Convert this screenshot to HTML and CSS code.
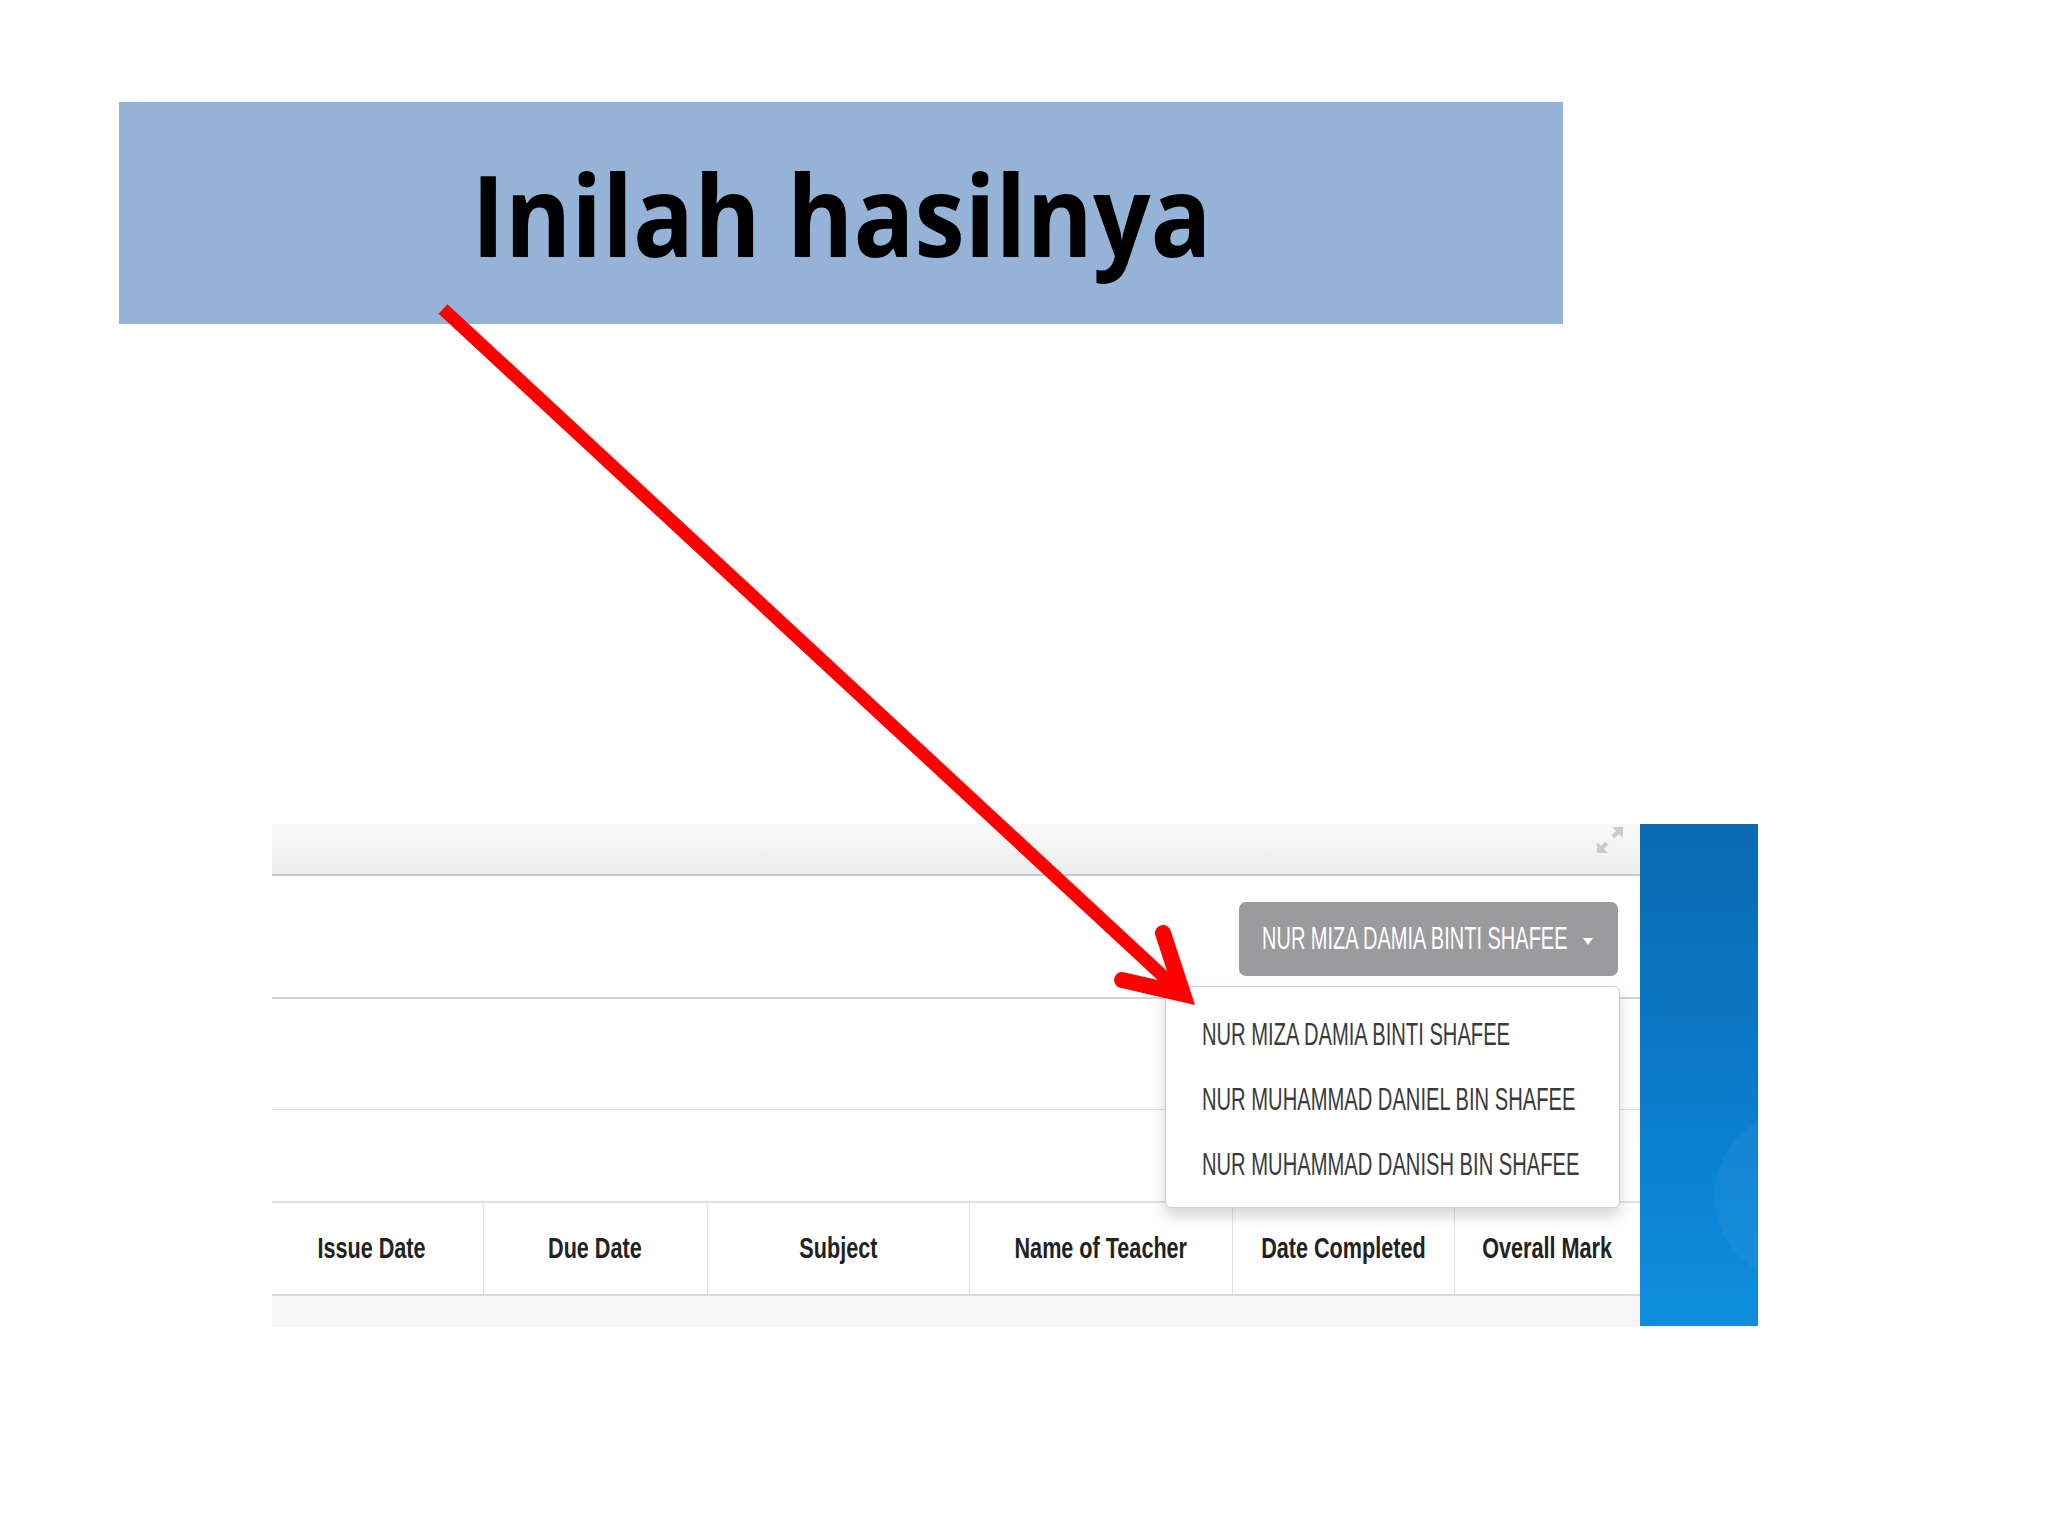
FILE: index.html
```html
<!DOCTYPE html>
<html lang="id">
<head>
  <meta charset="UTF-8">
  <meta name="viewport" content="width=device-width, initial-scale=1.0">
  <title>Inilah hasilnya</title>
  <link rel="stylesheet" href="styles.css">
</head>
<body>
  <div class="slide">
    <div class="banner">
      <h1 class="title">Inilah hasilnya</h1>
    </div>

    <div class="shot">
      <div class="app">
        <div class="app-top">
          <svg class="expand" viewBox="0 0 30 30">
            <path d="M4 26 L12 18 M18 12 L26 4" stroke="#cbcbcd" stroke-width="4" fill="none"/>
            <path d="M2 28 V17 L13 28 Z M28 2 H17 L28 13 Z" fill="#cbcbcd"/>
          </svg>
        </div>
        <div class="app-toolbar">
          <button class="student-btn">
            <span class="squash">NUR MIZA DAMIA BINTI SHAFEE</span>
            <span class="caret"></span>
          </button>
        </div>
        <div class="app-filter"></div>
        <div class="app-gap"></div>
        <table class="hw-table">
          <colgroup>
            <col style="width: 211px">
            <col style="width: 224px">
            <col style="width: 262px">
            <col style="width: 263px">
            <col style="width: 222px">
            <col>
          </colgroup>
          <thead>
            <tr>
              <th><span class="th-label">Issue Date</span></th>
              <th><span class="th-label">Due Date</span></th>
              <th><span class="th-label">Subject</span></th>
              <th><span class="th-label">Name of Teacher</span></th>
              <th><span class="th-label">Date Completed</span></th>
              <th><span class="th-label">Overall Mark</span></th>
            </tr>
          </thead>
          <tbody>
            <tr><td colspan="6"></td></tr>
          </tbody>
        </table>

        <ul class="student-menu">
          <li><span class="squash">NUR MIZA DAMIA BINTI SHAFEE</span></li>
          <li><span class="squash">NUR MUHAMMAD DANIEL BIN SHAFEE</span></li>
          <li><span class="squash">NUR MUHAMMAD DANISH BIN SHAFEE</span></li>
        </ul>
      </div>
      <div class="side"></div>
    </div>

    <!-- red pointer from the heading down to the menu -->
    <svg class="pointer" viewBox="0 0 2048 1536">
      <line x1="443" y1="309" x2="1178" y2="990" stroke="#ff0000" stroke-width="13"/>
      <polyline points="1163,933 1183,994 1122,980" fill="none" stroke="#ff0000" stroke-width="16" stroke-linecap="round" stroke-linejoin="miter"/>
    </svg>
  </div>
</body>
</html>
```

FILE: styles.css
```css
body {
  margin: 0;
  background: #fff;
  font-family: "Liberation Sans", Arial, sans-serif;
}
.slide {
  position: relative;
  width: 2048px;
  height: 1536px;
  overflow: hidden;
  background: #fefefe;
}
.banner {
  margin: 102px 0 0 119px;
  width: 1444px;
  height: 222px;
  background: #95b3d7;
  display: flex;
  align-items: center;
  justify-content: center;
}
.title {
  margin: 0;
  font-family: "Open Sans", sans-serif;
  font-weight: 700;
  font-size: 113px;
  line-height: 1;
  color: #000;
  transform: scaleX(0.895);
  white-space: nowrap;
}

/* app screenshot */
.shot {
  margin: 500px 0 0 272px;
  width: 1486px;
  height: 502px;
  display: flex;
}
.app {
  position: relative;
  width: 1368px;
  display: flex;
  flex-direction: column;
  background: #fefefe;
}
.app-top {
  flex: none;
  height: 52px;
  border-bottom: 2px solid #cacacc;
  background: linear-gradient(#f9f9fa, #ededef);
  display: flex;
  justify-content: flex-end;
  align-items: flex-start;
  padding: 1px 15px 0 0;
  box-sizing: border-box;
}
.expand {
  width: 30px;
  height: 30px;
}
.app-toolbar {
  flex: none;
  height: 123px;
  border-bottom: 2px solid #d2d2d4;
  display: flex;
  justify-content: flex-end;
  align-items: flex-start;
  padding: 26px 22px 0 0;
  box-sizing: border-box;
}
.student-btn {
  width: 379px;
  height: 74px;
  border: none;
  border-radius: 7px;
  background: #9b9a9d;
  color: #fff;
  font-family: "Liberation Sans", Arial, sans-serif;
  font-size: 31px;
  display: flex;
  align-items: center;
  padding: 0 25px 0 23px;
}
.student-btn .squash {
  flex: 1;
  min-width: 0;
  text-align: left;
  transform: scaleX(0.645);
}
.caret {
  flex: none;
  width: 0;
  height: 0;
  margin-top: 4px;
  border-top: 7px solid #fff;
  border-left: 5px solid transparent;
  border-right: 5px solid transparent;
}
.squash {
  display: inline-block;
  white-space: nowrap;
  transform-origin: left center;
}
.app-filter {
  flex: none;
  height: 110px;
  border-bottom: 1px solid #dedee0;
}
.app-gap {
  flex: none;
  height: 91px;
}
.hw-table {
  width: 100%;
  border-collapse: collapse;
  table-layout: fixed;
  border-top: 2px solid #e0e0e2;
}
.hw-table th {
  height: 91px;
  padding: 0;
  border-left: 1px solid #e2e2e4;
  border-bottom: 2px solid #dadadc;
  font-size: 29px;
  font-weight: 700;
  color: #222;
  white-space: nowrap;
  text-align: center;
}
.hw-table th:first-child {
  border-left: none;
  padding-right: 12px;
}
.th-label {
  display: inline-block;
  transform: scaleX(0.745);
}
.hw-table td {
  height: 31px;
  padding: 0;
  background: #f6f6f7;
}

/* open dropdown */
.student-menu {
  position: absolute;
  left: 893px;
  top: 162px;
  width: 455px;
  height: 222px;
  box-sizing: border-box;
  margin: 0;
  padding: 15px 0 0;
  list-style: none;
  background: #fff;
  border: 1px solid #cfcfd1;
  border-radius: 6px;
  box-shadow: 0 8px 14px rgba(0, 0, 0, 0.16);
}
.student-menu li {
  height: 65px;
  display: flex;
  align-items: center;
  padding-left: 36px;
  font-size: 32px;
  color: #3a3a3a;
}
.student-menu .squash {
  transform: scaleX(0.63);
}

.side {
  flex: none;
  width: 118px;
  background:
    radial-gradient(circle at 160px 372px, rgba(255, 255, 255, 0.04) 0 85px, transparent 86px),
    linear-gradient(#0a6ab1, #0b7ccb 55%, #0f8ee0);
}

.pointer {
  position: absolute;
  left: 0;
  top: 0;
  width: 2048px;
  height: 1536px;
  pointer-events: none;
}
```
